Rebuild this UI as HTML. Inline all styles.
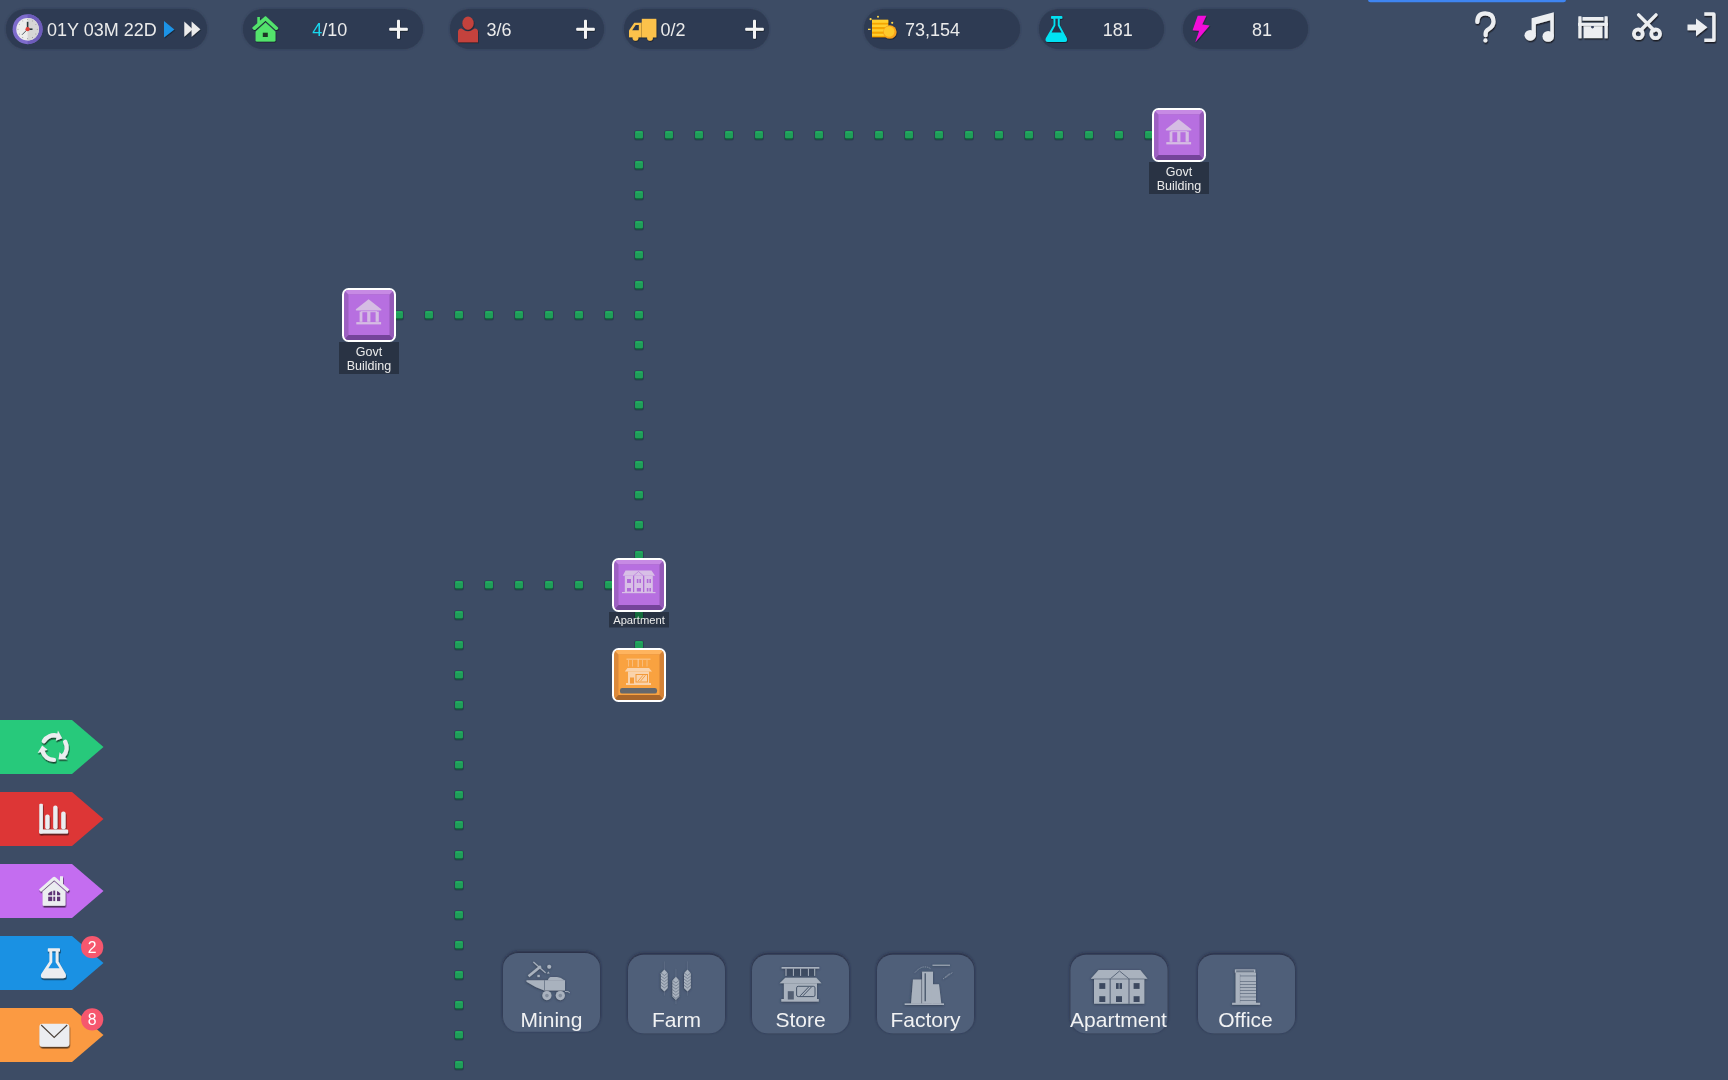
<!DOCTYPE html>
<html><head><meta charset="utf-8"><title>City Builder</title><style>
html,body{margin:0;padding:0;width:1728px;height:1080px;overflow:hidden;background:#3d4c65;}
svg{position:absolute;left:0;top:0;will-change:transform;}
text{font-family:"Liberation Sans",sans-serif;}
</style></head><body>
<svg width="1728" height="1080" viewBox="0 0 1728 1080">
<defs>
<filter id="cs" x="-20%" y="-20%" width="140%" height="140%"><feDropShadow dx="0" dy="-1.2" stdDeviation="1.6" flood-color="#1a2435" flood-opacity="0.85"/></filter>
<filter id="ps" x="-10%" y="-30%" width="120%" height="160%"><feDropShadow dx="0" dy="0" stdDeviation="1" flood-color="#27324a" flood-opacity="0.7"/></filter>
<filter id="ds" x="-30%" y="-30%" width="160%" height="160%"><feDropShadow dx="0.5" dy="1" stdDeviation="0.4" flood-color="#0e1420" flood-opacity="0.8"/></filter>
<filter id="ds2" x="-30%" y="-30%" width="160%" height="160%"><feDropShadow dx="0.6" dy="1.5" stdDeviation="0.5" flood-color="#14181f" flood-opacity="0.9"/></filter>
<filter id="is" x="-30%" y="-30%" width="160%" height="160%"><feDropShadow dx="-0.3" dy="0.6" stdDeviation="0.9" flood-color="#27344a" flood-opacity="0.9"/></filter>
<filter id="ds3" x="-30%" y="-30%" width="160%" height="160%"><feDropShadow dx="0.6" dy="1.6" stdDeviation="0.6" flood-color="#141414" flood-opacity="0.75"/></filter>
</defs>
<rect x="1368" y="-4" width="198" height="6.3" rx="2.5" fill="#3f85f1"/>
<rect x="6" y="9" width="201" height="40" rx="20" ry="20" fill="#2f3b52" filter="url(#ps)"/>
<rect x="243" y="9" width="180" height="40" rx="20" ry="20" fill="#2f3b52" filter="url(#ps)"/>
<rect x="450" y="9" width="154" height="40" rx="20" ry="20" fill="#2f3b52" filter="url(#ps)"/>
<rect x="624" y="9" width="145" height="40" rx="20" ry="20" fill="#2f3b52" filter="url(#ps)"/>
<rect x="864" y="9" width="156" height="40" rx="20" ry="20" fill="#2f3b52" filter="url(#ps)"/>
<rect x="1039" y="9" width="125" height="40" rx="20" ry="20" fill="#2f3b52" filter="url(#ps)"/>
<rect x="1183" y="9" width="125" height="40" rx="20" ry="20" fill="#2f3b52" filter="url(#ps)"/>
<circle cx="27.6" cy="29.2" r="15" fill="#7e6ccc"/>
<path d="M27.6 14.2 A15 15 0 0 1 27.6 44.2 Z" fill="#6d5cba"/>
<circle cx="27.6" cy="29.2" r="11.3" fill="#ececec"/>
<path d="M27.6 17.9 A11.3 11.3 0 0 1 27.6 40.5 Z" fill="#d6d6d6"/>
<circle cx="37.20" cy="29.20" r="0.45" fill="#6a6a6a"/>
<circle cx="35.91" cy="34.00" r="0.45" fill="#6a6a6a"/>
<circle cx="32.40" cy="37.51" r="0.45" fill="#6a6a6a"/>
<circle cx="27.60" cy="38.80" r="0.45" fill="#6a6a6a"/>
<circle cx="22.80" cy="37.51" r="0.45" fill="#6a6a6a"/>
<circle cx="19.29" cy="34.00" r="0.45" fill="#6a6a6a"/>
<circle cx="18.00" cy="29.20" r="0.45" fill="#6a6a6a"/>
<circle cx="19.29" cy="24.40" r="0.45" fill="#6a6a6a"/>
<circle cx="22.80" cy="20.89" r="0.45" fill="#6a6a6a"/>
<circle cx="27.60" cy="19.60" r="0.45" fill="#6a6a6a"/>
<circle cx="32.40" cy="20.89" r="0.45" fill="#6a6a6a"/>
<circle cx="35.91" cy="24.40" r="0.45" fill="#6a6a6a"/>
<g stroke="#29363c" stroke-linecap="butt"><line x1="27.6" y1="29.2" x2="27.6" y2="21.8" stroke-width="1.6"/><line x1="27.6" y1="29.2" x2="32.5" y2="29.2" stroke-width="1.6"/><line x1="27.6" y1="29.2" x2="22" y2="34.8" stroke-width="0.8"/></g>
<circle cx="27.6" cy="29.2" r="2.1" fill="#e2403a"/>
<text x="47" y="36.1" font-size="18" fill="#ebebeb" text-anchor="start" transform="matrix(1 0 0 1.06 0 -2.166)">01Y 03M 22D</text>
<polygon points="164,21 174.3,29.4 164,37.6" fill="#1f93e6" filter="url(#ds)"/>
<g fill="#ececec" filter="url(#ds)"><polygon points="184.3,21.6 192.6,29.2 184.3,36.8"/><polygon points="191.6,21.6 200.3,29.2 191.6,36.8"/></g>
<g filter="url(#ds)"><path d="M257.3 17 h2.6 v3.8 L265.1 16.3 Q265.5 16 265.9 16.3 L278 27.4 Q278.6 28.2 277.8 29 L277 29.8 Q276.2 30.4 275.5 29.8 L265.5 20.7 L255.3 29.8 Q254.6 30.4 253.8 29.8 L252.6 28.8 Q252 28.1 252.6 27.3 L257.3 23.2 Z" fill="#52e36c"/><path d="M255.6 31.4 L265.5 22.5 L275.4 31.4 V40.3 Q275.4 41.6 274 41.6 H257 Q255.6 41.6 255.6 40.3 Z" fill="#52e36c"/></g>
<rect x="262.8" y="32.7" width="5" height="4.3" fill="#1d3626"/>
<text x="312.3" y="36.1" font-size="18" fill="#ebebeb" transform="matrix(1 0 0 1.06 0 -2.166)"><tspan fill="#1ad6ee">4</tspan>/10</text>
<g fill="#f4f4f4" filter="url(#ds)"><rect x="389.2" y="27.7" width="18.6" height="3" rx="1"/><rect x="397.0" y="19.7" width="3" height="19" rx="1"/></g>
<g fill="#c4433c" filter="url(#ds)"><ellipse cx="468" cy="23.2" rx="5.6" ry="6.6"/><path d="M458 31.5 Q458.5 28.2 461.5 28.5 Q468 34 474.5 28.5 Q477.6 28.2 478 31.5 V42.3 H458 Z"/></g>
<text x="486.5" y="36.1" font-size="18" fill="#ebebeb" text-anchor="start" transform="matrix(1 0 0 1.06 0 -2.166)">3/6</text>
<g fill="#f4f4f4" filter="url(#ds)"><rect x="576.2" y="27.7" width="18.6" height="3" rx="1"/><rect x="584.0" y="19.7" width="3" height="19" rx="1"/></g>
<g fill="#fcc24c" filter="url(#ds)"><rect x="641.8" y="18.8" width="14.5" height="18.5"/><path d="M629 37.3 V30.6 L634.3 22.8 H641 V37.3 Z"/><circle cx="635.5" cy="37.8" r="2.9"/><circle cx="650" cy="37.8" r="2.9"/></g><polygon points="632.2,30.2 635.7,25 638.8,25 638.8,30.2" fill="#2a3549"/><rect x="641" y="22.5" width="0.8" height="14.8" fill="#d9a438"/>
<text x="660.5" y="36.1" font-size="18" fill="#ebebeb" text-anchor="start" transform="matrix(1 0 0 1.06 0 -2.166)">0/2</text>
<g fill="#f4f4f4" filter="url(#ds)"><rect x="745.2" y="27.7" width="18.6" height="3" rx="1"/><rect x="753.0" y="19.7" width="3" height="19" rx="1"/></g>
<g filter="url(#ds)"><rect x="872" y="19.8" width="16.2" height="17.4" fill="#f4a600"/><g fill="#ffcf2e"><rect x="872" y="19.8" width="16.2" height="3"/><rect x="872" y="24.6" width="16.2" height="2.4"/><rect x="872" y="29.2" width="16.2" height="2.4"/><rect x="872" y="33.8" width="16.2" height="2"/></g><circle cx="889.8" cy="31.9" r="6.7" fill="#f7a21a"/><circle cx="889.1" cy="31.5" r="5.3" fill="#ffc92c"/></g><g fill="#ffd84a"><circle cx="870.6" cy="19.2" r="1.1"/><circle cx="878" cy="16.8" r="1"/><circle cx="892.2" cy="22.8" r="1.1"/><rect x="868" y="28.7" width="2.6" height="1.3"/></g>
<text x="905" y="36.1" font-size="18" fill="#ebebeb" text-anchor="start" transform="matrix(1 0 0 1.06 0 -2.166)">73,154</text>
<g fill="#06e2f3" filter="url(#ds)"><rect x="1051" y="15.9" width="11.3" height="2.9" rx="0.8"/><path d="M1053.6 18.6 H1059.6 V25 L1066.8 38.3 Q1068 42 1064.2 42 H1048.4 Q1044.6 42 1045.8 38.3 L1053.6 25 Z"/></g><path d="M1055.4 18.8 H1057.8 V25.6 L1061.6 32.6 H1051.6 L1055.4 25.6 Z" fill="#27334a"/>
<text x="1117.7" y="36.1" font-size="18" fill="#ebebeb" text-anchor="middle" transform="matrix(1 0 0 1.06 0 -2.166)">181</text>
<polygon points="1197.7,15.8 1206.3,15.8 1202.2,24.6 1209.6,25.6 1195.3,42.3 1199.2,30.8 1192.6,30.2" fill="#f20cd9" filter="url(#ds)"/>
<text x="1262" y="36.1" font-size="18" fill="#ebebeb" text-anchor="middle" transform="matrix(1 0 0 1.06 0 -2.166)">81</text>
<g fill="#eceef1" stroke="#eceef1" filter="url(#ds2)"><path d="M1477.3 22 Q1477.3 13.3 1485.2 13.3 Q1493.5 13.3 1493.5 21.6 Q1493.5 26.2 1488.7 29 Q1485.6 30.8 1485.6 33.5 V35.2" fill="none" stroke-width="4.2" stroke-linecap="round"/><circle cx="1485.4" cy="40.4" r="2.1" stroke="none"/></g>
<g fill="#eceef1" stroke="#eceef1" filter="url(#ds2)"><path d="M1531.6 18.2 L1553.8 12.2 V36 L1550.3 36 V20.2 L1535.8 24.2 V34.6 L1531.6 34.6 Z" stroke="none"/><ellipse cx="1530.2" cy="35.3" rx="5.7" ry="5.4" stroke="none"/><ellipse cx="1548.2" cy="36.4" rx="5.7" ry="5.4" stroke="none"/></g>
<g fill="#eceef1" stroke="#eceef1" filter="url(#ds2)"><rect x="1578.3" y="16.3" width="3.2" height="22" rx="0.5" stroke="none"/><rect x="1604.5" y="16.3" width="3.2" height="22" rx="0.5" stroke="none"/><rect x="1582.5" y="17" width="21" height="3.6" stroke="none"/><rect x="1578" y="22.8" width="30" height="3.1" stroke="none"/><rect x="1583.6" y="26.3" width="18.8" height="11.8" stroke="none"/></g>
<path d="M1591.2 26.1 V27.2 Q1592.5 29.6 1593.8 27.2 V26.1 Z" fill="#3a4560"/>
<g fill="#eceef1" stroke="#eceef1" filter="url(#ds2)"><line x1="1638.6" y1="14.8" x2="1654.2" y2="30.5" stroke-width="3.3" stroke-linecap="round"/><line x1="1656" y1="14.8" x2="1640.4" y2="30.5" stroke-width="3.3" stroke-linecap="round"/><circle cx="1638.3" cy="33.8" r="4.4" fill="none" stroke-width="3.8"/><circle cx="1655.6" cy="33.8" r="4.4" fill="none" stroke-width="3.8"/></g>
<g fill="#eceef1" stroke="#eceef1" filter="url(#ds2)"><path d="M1704.3 12.3 H1713.6 Q1715.6 12.3 1715.6 14.3 V40 Q1715.6 42 1713.6 42 H1704.3 V38.6 H1712.2 V15.7 H1704.3 Z" stroke="none"/><path d="M1687.5 24.6 H1696 V18.4 L1707.4 27.2 L1696 36.3 V30.2 H1687.5 Z" stroke="none"/></g>
<rect x="634.2" y="130.4" width="9.6" height="10" rx="2" fill="#16283a" opacity="0.45"/><rect x="635" y="131" width="8" height="8.4" rx="1.3" fill="#135f37"/><rect x="635" y="131" width="8" height="7.3" rx="1.3" fill="#1f9e59"/><rect x="635.6" y="131.4" width="6.8" height="1.4" rx="0.6" fill="#27b066" opacity="0.8"/>
<rect x="664.2" y="130.4" width="9.6" height="10" rx="2" fill="#16283a" opacity="0.45"/><rect x="665" y="131" width="8" height="8.4" rx="1.3" fill="#135f37"/><rect x="665" y="131" width="8" height="7.3" rx="1.3" fill="#1f9e59"/><rect x="665.6" y="131.4" width="6.8" height="1.4" rx="0.6" fill="#27b066" opacity="0.8"/>
<rect x="694.2" y="130.4" width="9.6" height="10" rx="2" fill="#16283a" opacity="0.45"/><rect x="695" y="131" width="8" height="8.4" rx="1.3" fill="#135f37"/><rect x="695" y="131" width="8" height="7.3" rx="1.3" fill="#1f9e59"/><rect x="695.6" y="131.4" width="6.8" height="1.4" rx="0.6" fill="#27b066" opacity="0.8"/>
<rect x="724.2" y="130.4" width="9.6" height="10" rx="2" fill="#16283a" opacity="0.45"/><rect x="725" y="131" width="8" height="8.4" rx="1.3" fill="#135f37"/><rect x="725" y="131" width="8" height="7.3" rx="1.3" fill="#1f9e59"/><rect x="725.6" y="131.4" width="6.8" height="1.4" rx="0.6" fill="#27b066" opacity="0.8"/>
<rect x="754.2" y="130.4" width="9.6" height="10" rx="2" fill="#16283a" opacity="0.45"/><rect x="755" y="131" width="8" height="8.4" rx="1.3" fill="#135f37"/><rect x="755" y="131" width="8" height="7.3" rx="1.3" fill="#1f9e59"/><rect x="755.6" y="131.4" width="6.8" height="1.4" rx="0.6" fill="#27b066" opacity="0.8"/>
<rect x="784.2" y="130.4" width="9.6" height="10" rx="2" fill="#16283a" opacity="0.45"/><rect x="785" y="131" width="8" height="8.4" rx="1.3" fill="#135f37"/><rect x="785" y="131" width="8" height="7.3" rx="1.3" fill="#1f9e59"/><rect x="785.6" y="131.4" width="6.8" height="1.4" rx="0.6" fill="#27b066" opacity="0.8"/>
<rect x="814.2" y="130.4" width="9.6" height="10" rx="2" fill="#16283a" opacity="0.45"/><rect x="815" y="131" width="8" height="8.4" rx="1.3" fill="#135f37"/><rect x="815" y="131" width="8" height="7.3" rx="1.3" fill="#1f9e59"/><rect x="815.6" y="131.4" width="6.8" height="1.4" rx="0.6" fill="#27b066" opacity="0.8"/>
<rect x="844.2" y="130.4" width="9.6" height="10" rx="2" fill="#16283a" opacity="0.45"/><rect x="845" y="131" width="8" height="8.4" rx="1.3" fill="#135f37"/><rect x="845" y="131" width="8" height="7.3" rx="1.3" fill="#1f9e59"/><rect x="845.6" y="131.4" width="6.8" height="1.4" rx="0.6" fill="#27b066" opacity="0.8"/>
<rect x="874.2" y="130.4" width="9.6" height="10" rx="2" fill="#16283a" opacity="0.45"/><rect x="875" y="131" width="8" height="8.4" rx="1.3" fill="#135f37"/><rect x="875" y="131" width="8" height="7.3" rx="1.3" fill="#1f9e59"/><rect x="875.6" y="131.4" width="6.8" height="1.4" rx="0.6" fill="#27b066" opacity="0.8"/>
<rect x="904.2" y="130.4" width="9.6" height="10" rx="2" fill="#16283a" opacity="0.45"/><rect x="905" y="131" width="8" height="8.4" rx="1.3" fill="#135f37"/><rect x="905" y="131" width="8" height="7.3" rx="1.3" fill="#1f9e59"/><rect x="905.6" y="131.4" width="6.8" height="1.4" rx="0.6" fill="#27b066" opacity="0.8"/>
<rect x="934.2" y="130.4" width="9.6" height="10" rx="2" fill="#16283a" opacity="0.45"/><rect x="935" y="131" width="8" height="8.4" rx="1.3" fill="#135f37"/><rect x="935" y="131" width="8" height="7.3" rx="1.3" fill="#1f9e59"/><rect x="935.6" y="131.4" width="6.8" height="1.4" rx="0.6" fill="#27b066" opacity="0.8"/>
<rect x="964.2" y="130.4" width="9.6" height="10" rx="2" fill="#16283a" opacity="0.45"/><rect x="965" y="131" width="8" height="8.4" rx="1.3" fill="#135f37"/><rect x="965" y="131" width="8" height="7.3" rx="1.3" fill="#1f9e59"/><rect x="965.6" y="131.4" width="6.8" height="1.4" rx="0.6" fill="#27b066" opacity="0.8"/>
<rect x="994.2" y="130.4" width="9.6" height="10" rx="2" fill="#16283a" opacity="0.45"/><rect x="995" y="131" width="8" height="8.4" rx="1.3" fill="#135f37"/><rect x="995" y="131" width="8" height="7.3" rx="1.3" fill="#1f9e59"/><rect x="995.6" y="131.4" width="6.8" height="1.4" rx="0.6" fill="#27b066" opacity="0.8"/>
<rect x="1024.2" y="130.4" width="9.6" height="10" rx="2" fill="#16283a" opacity="0.45"/><rect x="1025" y="131" width="8" height="8.4" rx="1.3" fill="#135f37"/><rect x="1025" y="131" width="8" height="7.3" rx="1.3" fill="#1f9e59"/><rect x="1025.6" y="131.4" width="6.8" height="1.4" rx="0.6" fill="#27b066" opacity="0.8"/>
<rect x="1054.2" y="130.4" width="9.6" height="10" rx="2" fill="#16283a" opacity="0.45"/><rect x="1055" y="131" width="8" height="8.4" rx="1.3" fill="#135f37"/><rect x="1055" y="131" width="8" height="7.3" rx="1.3" fill="#1f9e59"/><rect x="1055.6" y="131.4" width="6.8" height="1.4" rx="0.6" fill="#27b066" opacity="0.8"/>
<rect x="1084.2" y="130.4" width="9.6" height="10" rx="2" fill="#16283a" opacity="0.45"/><rect x="1085" y="131" width="8" height="8.4" rx="1.3" fill="#135f37"/><rect x="1085" y="131" width="8" height="7.3" rx="1.3" fill="#1f9e59"/><rect x="1085.6" y="131.4" width="6.8" height="1.4" rx="0.6" fill="#27b066" opacity="0.8"/>
<rect x="1114.2" y="130.4" width="9.6" height="10" rx="2" fill="#16283a" opacity="0.45"/><rect x="1115" y="131" width="8" height="8.4" rx="1.3" fill="#135f37"/><rect x="1115" y="131" width="8" height="7.3" rx="1.3" fill="#1f9e59"/><rect x="1115.6" y="131.4" width="6.8" height="1.4" rx="0.6" fill="#27b066" opacity="0.8"/>
<rect x="1144.2" y="130.4" width="9.6" height="10" rx="2" fill="#16283a" opacity="0.45"/><rect x="1145" y="131" width="8" height="8.4" rx="1.3" fill="#135f37"/><rect x="1145" y="131" width="8" height="7.3" rx="1.3" fill="#1f9e59"/><rect x="1145.6" y="131.4" width="6.8" height="1.4" rx="0.6" fill="#27b066" opacity="0.8"/>
<rect x="634.2" y="160.4" width="9.6" height="10" rx="2" fill="#16283a" opacity="0.45"/><rect x="635" y="161" width="8" height="8.4" rx="1.3" fill="#135f37"/><rect x="635" y="161" width="8" height="7.3" rx="1.3" fill="#1f9e59"/><rect x="635.6" y="161.4" width="6.8" height="1.4" rx="0.6" fill="#27b066" opacity="0.8"/>
<rect x="634.2" y="190.4" width="9.6" height="10" rx="2" fill="#16283a" opacity="0.45"/><rect x="635" y="191" width="8" height="8.4" rx="1.3" fill="#135f37"/><rect x="635" y="191" width="8" height="7.3" rx="1.3" fill="#1f9e59"/><rect x="635.6" y="191.4" width="6.8" height="1.4" rx="0.6" fill="#27b066" opacity="0.8"/>
<rect x="634.2" y="220.4" width="9.6" height="10" rx="2" fill="#16283a" opacity="0.45"/><rect x="635" y="221" width="8" height="8.4" rx="1.3" fill="#135f37"/><rect x="635" y="221" width="8" height="7.3" rx="1.3" fill="#1f9e59"/><rect x="635.6" y="221.4" width="6.8" height="1.4" rx="0.6" fill="#27b066" opacity="0.8"/>
<rect x="634.2" y="250.4" width="9.6" height="10" rx="2" fill="#16283a" opacity="0.45"/><rect x="635" y="251" width="8" height="8.4" rx="1.3" fill="#135f37"/><rect x="635" y="251" width="8" height="7.3" rx="1.3" fill="#1f9e59"/><rect x="635.6" y="251.4" width="6.8" height="1.4" rx="0.6" fill="#27b066" opacity="0.8"/>
<rect x="634.2" y="280.4" width="9.6" height="10" rx="2" fill="#16283a" opacity="0.45"/><rect x="635" y="281" width="8" height="8.4" rx="1.3" fill="#135f37"/><rect x="635" y="281" width="8" height="7.3" rx="1.3" fill="#1f9e59"/><rect x="635.6" y="281.4" width="6.8" height="1.4" rx="0.6" fill="#27b066" opacity="0.8"/>
<rect x="634.2" y="310.4" width="9.6" height="10" rx="2" fill="#16283a" opacity="0.45"/><rect x="635" y="311" width="8" height="8.4" rx="1.3" fill="#135f37"/><rect x="635" y="311" width="8" height="7.3" rx="1.3" fill="#1f9e59"/><rect x="635.6" y="311.4" width="6.8" height="1.4" rx="0.6" fill="#27b066" opacity="0.8"/>
<rect x="634.2" y="340.4" width="9.6" height="10" rx="2" fill="#16283a" opacity="0.45"/><rect x="635" y="341" width="8" height="8.4" rx="1.3" fill="#135f37"/><rect x="635" y="341" width="8" height="7.3" rx="1.3" fill="#1f9e59"/><rect x="635.6" y="341.4" width="6.8" height="1.4" rx="0.6" fill="#27b066" opacity="0.8"/>
<rect x="634.2" y="370.4" width="9.6" height="10" rx="2" fill="#16283a" opacity="0.45"/><rect x="635" y="371" width="8" height="8.4" rx="1.3" fill="#135f37"/><rect x="635" y="371" width="8" height="7.3" rx="1.3" fill="#1f9e59"/><rect x="635.6" y="371.4" width="6.8" height="1.4" rx="0.6" fill="#27b066" opacity="0.8"/>
<rect x="634.2" y="400.4" width="9.6" height="10" rx="2" fill="#16283a" opacity="0.45"/><rect x="635" y="401" width="8" height="8.4" rx="1.3" fill="#135f37"/><rect x="635" y="401" width="8" height="7.3" rx="1.3" fill="#1f9e59"/><rect x="635.6" y="401.4" width="6.8" height="1.4" rx="0.6" fill="#27b066" opacity="0.8"/>
<rect x="634.2" y="430.4" width="9.6" height="10" rx="2" fill="#16283a" opacity="0.45"/><rect x="635" y="431" width="8" height="8.4" rx="1.3" fill="#135f37"/><rect x="635" y="431" width="8" height="7.3" rx="1.3" fill="#1f9e59"/><rect x="635.6" y="431.4" width="6.8" height="1.4" rx="0.6" fill="#27b066" opacity="0.8"/>
<rect x="634.2" y="460.4" width="9.6" height="10" rx="2" fill="#16283a" opacity="0.45"/><rect x="635" y="461" width="8" height="8.4" rx="1.3" fill="#135f37"/><rect x="635" y="461" width="8" height="7.3" rx="1.3" fill="#1f9e59"/><rect x="635.6" y="461.4" width="6.8" height="1.4" rx="0.6" fill="#27b066" opacity="0.8"/>
<rect x="634.2" y="490.4" width="9.6" height="10" rx="2" fill="#16283a" opacity="0.45"/><rect x="635" y="491" width="8" height="8.4" rx="1.3" fill="#135f37"/><rect x="635" y="491" width="8" height="7.3" rx="1.3" fill="#1f9e59"/><rect x="635.6" y="491.4" width="6.8" height="1.4" rx="0.6" fill="#27b066" opacity="0.8"/>
<rect x="634.2" y="520.4" width="9.6" height="10" rx="2" fill="#16283a" opacity="0.45"/><rect x="635" y="521" width="8" height="8.4" rx="1.3" fill="#135f37"/><rect x="635" y="521" width="8" height="7.3" rx="1.3" fill="#1f9e59"/><rect x="635.6" y="521.4" width="6.8" height="1.4" rx="0.6" fill="#27b066" opacity="0.8"/>
<rect x="634.2" y="550.4" width="9.6" height="10" rx="2" fill="#16283a" opacity="0.45"/><rect x="635" y="551" width="8" height="8.4" rx="1.3" fill="#135f37"/><rect x="635" y="551" width="8" height="7.3" rx="1.3" fill="#1f9e59"/><rect x="635.6" y="551.4" width="6.8" height="1.4" rx="0.6" fill="#27b066" opacity="0.8"/>
<rect x="634.2" y="610.4" width="9.6" height="10" rx="2" fill="#16283a" opacity="0.45"/><rect x="635" y="611" width="8" height="8.4" rx="1.3" fill="#135f37"/><rect x="635" y="611" width="8" height="7.3" rx="1.3" fill="#1f9e59"/><rect x="635.6" y="611.4" width="6.8" height="1.4" rx="0.6" fill="#27b066" opacity="0.8"/>
<rect x="634.2" y="640.4" width="9.6" height="10" rx="2" fill="#16283a" opacity="0.45"/><rect x="635" y="641" width="8" height="8.4" rx="1.3" fill="#135f37"/><rect x="635" y="641" width="8" height="7.3" rx="1.3" fill="#1f9e59"/><rect x="635.6" y="641.4" width="6.8" height="1.4" rx="0.6" fill="#27b066" opacity="0.8"/>
<rect x="394.2" y="310.4" width="9.6" height="10" rx="2" fill="#16283a" opacity="0.45"/><rect x="395" y="311" width="8" height="8.4" rx="1.3" fill="#135f37"/><rect x="395" y="311" width="8" height="7.3" rx="1.3" fill="#1f9e59"/><rect x="395.6" y="311.4" width="6.8" height="1.4" rx="0.6" fill="#27b066" opacity="0.8"/>
<rect x="424.2" y="310.4" width="9.6" height="10" rx="2" fill="#16283a" opacity="0.45"/><rect x="425" y="311" width="8" height="8.4" rx="1.3" fill="#135f37"/><rect x="425" y="311" width="8" height="7.3" rx="1.3" fill="#1f9e59"/><rect x="425.6" y="311.4" width="6.8" height="1.4" rx="0.6" fill="#27b066" opacity="0.8"/>
<rect x="454.2" y="310.4" width="9.6" height="10" rx="2" fill="#16283a" opacity="0.45"/><rect x="455" y="311" width="8" height="8.4" rx="1.3" fill="#135f37"/><rect x="455" y="311" width="8" height="7.3" rx="1.3" fill="#1f9e59"/><rect x="455.6" y="311.4" width="6.8" height="1.4" rx="0.6" fill="#27b066" opacity="0.8"/>
<rect x="484.2" y="310.4" width="9.6" height="10" rx="2" fill="#16283a" opacity="0.45"/><rect x="485" y="311" width="8" height="8.4" rx="1.3" fill="#135f37"/><rect x="485" y="311" width="8" height="7.3" rx="1.3" fill="#1f9e59"/><rect x="485.6" y="311.4" width="6.8" height="1.4" rx="0.6" fill="#27b066" opacity="0.8"/>
<rect x="514.2" y="310.4" width="9.6" height="10" rx="2" fill="#16283a" opacity="0.45"/><rect x="515" y="311" width="8" height="8.4" rx="1.3" fill="#135f37"/><rect x="515" y="311" width="8" height="7.3" rx="1.3" fill="#1f9e59"/><rect x="515.6" y="311.4" width="6.8" height="1.4" rx="0.6" fill="#27b066" opacity="0.8"/>
<rect x="544.2" y="310.4" width="9.6" height="10" rx="2" fill="#16283a" opacity="0.45"/><rect x="545" y="311" width="8" height="8.4" rx="1.3" fill="#135f37"/><rect x="545" y="311" width="8" height="7.3" rx="1.3" fill="#1f9e59"/><rect x="545.6" y="311.4" width="6.8" height="1.4" rx="0.6" fill="#27b066" opacity="0.8"/>
<rect x="574.2" y="310.4" width="9.6" height="10" rx="2" fill="#16283a" opacity="0.45"/><rect x="575" y="311" width="8" height="8.4" rx="1.3" fill="#135f37"/><rect x="575" y="311" width="8" height="7.3" rx="1.3" fill="#1f9e59"/><rect x="575.6" y="311.4" width="6.8" height="1.4" rx="0.6" fill="#27b066" opacity="0.8"/>
<rect x="604.2" y="310.4" width="9.6" height="10" rx="2" fill="#16283a" opacity="0.45"/><rect x="605" y="311" width="8" height="8.4" rx="1.3" fill="#135f37"/><rect x="605" y="311" width="8" height="7.3" rx="1.3" fill="#1f9e59"/><rect x="605.6" y="311.4" width="6.8" height="1.4" rx="0.6" fill="#27b066" opacity="0.8"/>
<rect x="454.2" y="580.4" width="9.6" height="10" rx="2" fill="#16283a" opacity="0.45"/><rect x="455" y="581" width="8" height="8.4" rx="1.3" fill="#135f37"/><rect x="455" y="581" width="8" height="7.3" rx="1.3" fill="#1f9e59"/><rect x="455.6" y="581.4" width="6.8" height="1.4" rx="0.6" fill="#27b066" opacity="0.8"/>
<rect x="484.2" y="580.4" width="9.6" height="10" rx="2" fill="#16283a" opacity="0.45"/><rect x="485" y="581" width="8" height="8.4" rx="1.3" fill="#135f37"/><rect x="485" y="581" width="8" height="7.3" rx="1.3" fill="#1f9e59"/><rect x="485.6" y="581.4" width="6.8" height="1.4" rx="0.6" fill="#27b066" opacity="0.8"/>
<rect x="514.2" y="580.4" width="9.6" height="10" rx="2" fill="#16283a" opacity="0.45"/><rect x="515" y="581" width="8" height="8.4" rx="1.3" fill="#135f37"/><rect x="515" y="581" width="8" height="7.3" rx="1.3" fill="#1f9e59"/><rect x="515.6" y="581.4" width="6.8" height="1.4" rx="0.6" fill="#27b066" opacity="0.8"/>
<rect x="544.2" y="580.4" width="9.6" height="10" rx="2" fill="#16283a" opacity="0.45"/><rect x="545" y="581" width="8" height="8.4" rx="1.3" fill="#135f37"/><rect x="545" y="581" width="8" height="7.3" rx="1.3" fill="#1f9e59"/><rect x="545.6" y="581.4" width="6.8" height="1.4" rx="0.6" fill="#27b066" opacity="0.8"/>
<rect x="574.2" y="580.4" width="9.6" height="10" rx="2" fill="#16283a" opacity="0.45"/><rect x="575" y="581" width="8" height="8.4" rx="1.3" fill="#135f37"/><rect x="575" y="581" width="8" height="7.3" rx="1.3" fill="#1f9e59"/><rect x="575.6" y="581.4" width="6.8" height="1.4" rx="0.6" fill="#27b066" opacity="0.8"/>
<rect x="604.2" y="580.4" width="9.6" height="10" rx="2" fill="#16283a" opacity="0.45"/><rect x="605" y="581" width="8" height="8.4" rx="1.3" fill="#135f37"/><rect x="605" y="581" width="8" height="7.3" rx="1.3" fill="#1f9e59"/><rect x="605.6" y="581.4" width="6.8" height="1.4" rx="0.6" fill="#27b066" opacity="0.8"/>
<rect x="454.2" y="610.4" width="9.6" height="10" rx="2" fill="#16283a" opacity="0.45"/><rect x="455" y="611" width="8" height="8.4" rx="1.3" fill="#135f37"/><rect x="455" y="611" width="8" height="7.3" rx="1.3" fill="#1f9e59"/><rect x="455.6" y="611.4" width="6.8" height="1.4" rx="0.6" fill="#27b066" opacity="0.8"/>
<rect x="454.2" y="640.4" width="9.6" height="10" rx="2" fill="#16283a" opacity="0.45"/><rect x="455" y="641" width="8" height="8.4" rx="1.3" fill="#135f37"/><rect x="455" y="641" width="8" height="7.3" rx="1.3" fill="#1f9e59"/><rect x="455.6" y="641.4" width="6.8" height="1.4" rx="0.6" fill="#27b066" opacity="0.8"/>
<rect x="454.2" y="670.4" width="9.6" height="10" rx="2" fill="#16283a" opacity="0.45"/><rect x="455" y="671" width="8" height="8.4" rx="1.3" fill="#135f37"/><rect x="455" y="671" width="8" height="7.3" rx="1.3" fill="#1f9e59"/><rect x="455.6" y="671.4" width="6.8" height="1.4" rx="0.6" fill="#27b066" opacity="0.8"/>
<rect x="454.2" y="700.4" width="9.6" height="10" rx="2" fill="#16283a" opacity="0.45"/><rect x="455" y="701" width="8" height="8.4" rx="1.3" fill="#135f37"/><rect x="455" y="701" width="8" height="7.3" rx="1.3" fill="#1f9e59"/><rect x="455.6" y="701.4" width="6.8" height="1.4" rx="0.6" fill="#27b066" opacity="0.8"/>
<rect x="454.2" y="730.4" width="9.6" height="10" rx="2" fill="#16283a" opacity="0.45"/><rect x="455" y="731" width="8" height="8.4" rx="1.3" fill="#135f37"/><rect x="455" y="731" width="8" height="7.3" rx="1.3" fill="#1f9e59"/><rect x="455.6" y="731.4" width="6.8" height="1.4" rx="0.6" fill="#27b066" opacity="0.8"/>
<rect x="454.2" y="760.4" width="9.6" height="10" rx="2" fill="#16283a" opacity="0.45"/><rect x="455" y="761" width="8" height="8.4" rx="1.3" fill="#135f37"/><rect x="455" y="761" width="8" height="7.3" rx="1.3" fill="#1f9e59"/><rect x="455.6" y="761.4" width="6.8" height="1.4" rx="0.6" fill="#27b066" opacity="0.8"/>
<rect x="454.2" y="790.4" width="9.6" height="10" rx="2" fill="#16283a" opacity="0.45"/><rect x="455" y="791" width="8" height="8.4" rx="1.3" fill="#135f37"/><rect x="455" y="791" width="8" height="7.3" rx="1.3" fill="#1f9e59"/><rect x="455.6" y="791.4" width="6.8" height="1.4" rx="0.6" fill="#27b066" opacity="0.8"/>
<rect x="454.2" y="820.4" width="9.6" height="10" rx="2" fill="#16283a" opacity="0.45"/><rect x="455" y="821" width="8" height="8.4" rx="1.3" fill="#135f37"/><rect x="455" y="821" width="8" height="7.3" rx="1.3" fill="#1f9e59"/><rect x="455.6" y="821.4" width="6.8" height="1.4" rx="0.6" fill="#27b066" opacity="0.8"/>
<rect x="454.2" y="850.4" width="9.6" height="10" rx="2" fill="#16283a" opacity="0.45"/><rect x="455" y="851" width="8" height="8.4" rx="1.3" fill="#135f37"/><rect x="455" y="851" width="8" height="7.3" rx="1.3" fill="#1f9e59"/><rect x="455.6" y="851.4" width="6.8" height="1.4" rx="0.6" fill="#27b066" opacity="0.8"/>
<rect x="454.2" y="880.4" width="9.6" height="10" rx="2" fill="#16283a" opacity="0.45"/><rect x="455" y="881" width="8" height="8.4" rx="1.3" fill="#135f37"/><rect x="455" y="881" width="8" height="7.3" rx="1.3" fill="#1f9e59"/><rect x="455.6" y="881.4" width="6.8" height="1.4" rx="0.6" fill="#27b066" opacity="0.8"/>
<rect x="454.2" y="910.4" width="9.6" height="10" rx="2" fill="#16283a" opacity="0.45"/><rect x="455" y="911" width="8" height="8.4" rx="1.3" fill="#135f37"/><rect x="455" y="911" width="8" height="7.3" rx="1.3" fill="#1f9e59"/><rect x="455.6" y="911.4" width="6.8" height="1.4" rx="0.6" fill="#27b066" opacity="0.8"/>
<rect x="454.2" y="940.4" width="9.6" height="10" rx="2" fill="#16283a" opacity="0.45"/><rect x="455" y="941" width="8" height="8.4" rx="1.3" fill="#135f37"/><rect x="455" y="941" width="8" height="7.3" rx="1.3" fill="#1f9e59"/><rect x="455.6" y="941.4" width="6.8" height="1.4" rx="0.6" fill="#27b066" opacity="0.8"/>
<rect x="454.2" y="970.4" width="9.6" height="10" rx="2" fill="#16283a" opacity="0.45"/><rect x="455" y="971" width="8" height="8.4" rx="1.3" fill="#135f37"/><rect x="455" y="971" width="8" height="7.3" rx="1.3" fill="#1f9e59"/><rect x="455.6" y="971.4" width="6.8" height="1.4" rx="0.6" fill="#27b066" opacity="0.8"/>
<rect x="454.2" y="1000.4" width="9.6" height="10" rx="2" fill="#16283a" opacity="0.45"/><rect x="455" y="1001" width="8" height="8.4" rx="1.3" fill="#135f37"/><rect x="455" y="1001" width="8" height="7.3" rx="1.3" fill="#1f9e59"/><rect x="455.6" y="1001.4" width="6.8" height="1.4" rx="0.6" fill="#27b066" opacity="0.8"/>
<rect x="454.2" y="1030.4" width="9.6" height="10" rx="2" fill="#16283a" opacity="0.45"/><rect x="455" y="1031" width="8" height="8.4" rx="1.3" fill="#135f37"/><rect x="455" y="1031" width="8" height="7.3" rx="1.3" fill="#1f9e59"/><rect x="455.6" y="1031.4" width="6.8" height="1.4" rx="0.6" fill="#27b066" opacity="0.8"/>
<rect x="454.2" y="1060.4" width="9.6" height="10" rx="2" fill="#16283a" opacity="0.45"/><rect x="455" y="1061" width="8" height="8.4" rx="1.3" fill="#135f37"/><rect x="455" y="1061" width="8" height="7.3" rx="1.3" fill="#1f9e59"/><rect x="455.6" y="1061.4" width="6.8" height="1.4" rx="0.6" fill="#27b066" opacity="0.8"/>
<rect x="1152" y="108" width="54" height="54" rx="6.5" fill="#ffffff"/><clipPath id="tc1"><rect x="1154" y="110" width="50" height="50" rx="4.5"/></clipPath><g clip-path="url(#tc1)"><rect x="1154" y="110" width="25" height="50" fill="#9d60c2"/><rect x="1179" y="110" width="25" height="50" fill="#955ab8"/><polygon points="1154,110 1204,110 1199.5,114.5 1158.5,114.5" fill="#c78ae4"/><polygon points="1154,160 1158.5,155 1199.5,155 1204,160" fill="#74449a"/><rect x="1158.5" y="114.5" width="41" height="40.5" fill="#b76fe0"/></g>
<g fill="#d5bce3" transform="translate(1152,108)"><path d="M26.6 11.3 L39.3 21.3 Q39.8 22.6 38.6 22.6 H14.6 Q13.4 22.6 13.9 21.3 Z"/><rect x="17.6" y="23.6" width="2.8" height="10.2"/><rect x="25.2" y="23.6" width="3.2" height="10.2"/><rect x="33.6" y="23.6" width="3.2" height="10.2"/><rect x="19" y="23.2" width="16" height="1"/><rect x="14.3" y="34.1" width="24.8" height="2.3"/></g>
<rect x="342" y="288" width="54" height="54" rx="6.5" fill="#ffffff"/><clipPath id="tc2"><rect x="344" y="290" width="50" height="50" rx="4.5"/></clipPath><g clip-path="url(#tc2)"><rect x="344" y="290" width="25" height="50" fill="#9d60c2"/><rect x="369" y="290" width="25" height="50" fill="#955ab8"/><polygon points="344,290 394,290 389.5,294.5 348.5,294.5" fill="#c78ae4"/><polygon points="344,340 348.5,335 389.5,335 394,340" fill="#74449a"/><rect x="348.5" y="294.5" width="41" height="40.5" fill="#b76fe0"/></g>
<g fill="#d5bce3" transform="translate(342,288)"><path d="M26.6 11.3 L39.3 21.3 Q39.8 22.6 38.6 22.6 H14.6 Q13.4 22.6 13.9 21.3 Z"/><rect x="17.6" y="23.6" width="2.8" height="10.2"/><rect x="25.2" y="23.6" width="3.2" height="10.2"/><rect x="33.6" y="23.6" width="3.2" height="10.2"/><rect x="19" y="23.2" width="16" height="1"/><rect x="14.3" y="34.1" width="24.8" height="2.3"/></g>
<rect x="612" y="558" width="54" height="54" rx="6.5" fill="#ffffff"/><clipPath id="tc3"><rect x="614" y="560" width="50" height="50" rx="4.5"/></clipPath><g clip-path="url(#tc3)"><rect x="614" y="560" width="25" height="50" fill="#9d60c2"/><rect x="639" y="560" width="25" height="50" fill="#955ab8"/><polygon points="614,560 664,560 659.5,564.5 618.5,564.5" fill="#c78ae4"/><polygon points="614,610 618.5,605 659.5,605 664,610" fill="#74449a"/><rect x="618.5" y="564.5" width="41" height="40.5" fill="#b76fe0"/></g>
<g transform="translate(612,558)"><path d="M13.5 12.5 H39.5 L43 17.8 H10.8 Z" fill="#d8bfe6"/><rect x="12.8" y="17.8" width="28" height="16.5" fill="#d8bfe6"/><rect x="10" y="34" width="33.5" height="1.2" fill="#d8bfe6"/><g fill="#b06ad8"><rect x="21" y="17.8" width="1.2" height="16.2"/><rect x="31" y="17.8" width="1.3" height="16.2"/><rect x="15" y="21" width="4" height="4"/><rect x="15" y="30" width="4" height="3.5"/><rect x="24.8" y="21" width="1.6" height="4"/><rect x="27.4" y="21" width="1.6" height="4"/><rect x="24.8" y="30" width="4.2" height="3.5"/><rect x="34.8" y="21" width="1.6" height="4"/><rect x="37.4" y="21" width="1.6" height="4"/><rect x="34.8" y="30" width="1.6" height="3.5"/><rect x="37.4" y="30" width="1.6" height="3.5"/></g><path d="M21.5 17.8 L26.5 13.5 L31.5 17.8" fill="none" stroke="#b06ad8" stroke-width="0.6"/></g>
<rect x="612" y="648" width="54" height="54" rx="6.5" fill="#ffffff"/><clipPath id="tc4"><rect x="614" y="650" width="50" height="50" rx="4.5"/></clipPath><g clip-path="url(#tc4)"><rect x="614" y="650" width="25" height="50" fill="#dc893a"/><rect x="639" y="650" width="25" height="50" fill="#d48236"/><polygon points="614,650 664,650 659.5,654.5 618.5,654.5" fill="#ffb45e"/><polygon points="614,700 618.5,695 659.5,695 664,700" fill="#a9662a"/><rect x="618.5" y="654.5" width="41" height="40.5" fill="#f9a240"/></g>
<g transform="translate(612,648)"><g fill="#fad3ab" opacity="0.55"><rect x="14.5" y="10.5" width="24" height="1.5"/><rect x="16" y="12" width="1" height="6.5"/><rect x="20" y="12" width="1" height="6.5"/><rect x="30" y="12" width="1" height="6.5"/><rect x="34.5" y="12" width="1" height="6.5"/></g><rect x="25.7" y="11" width="0.9" height="8" fill="#fad3ab"/><path d="M15.5 20 H37 L40 23.5 H12.8 Z" fill="#fad3ab"/><rect x="16" y="23.5" width="21" height="12" fill="#fad3ab"/><rect x="14" y="35" width="25" height="2" fill="#fad3ab"/><rect x="18" y="29.5" width="4" height="6" fill="#f39a3a"/><rect x="23.5" y="26" width="12.5" height="8.5" fill="#f39a3a"/><rect x="24.5" y="27" width="10.5" height="6.5" fill="#fad3ab"/><path d="M26 33.2 L31 27.2 M28.5 33.2 L33.5 27.2" stroke="#f39a3a" stroke-width="0.9"/></g>
<rect x="620" y="688" width="37" height="5.6" rx="2.2" fill="#65686d"/>
<rect x="1149" y="162" width="60" height="32" fill="rgba(0,0,0,0.32)"/>
<text x="1179" y="175.6" font-size="12.5" fill="#ebebeb" text-anchor="middle">Govt</text>
<text x="1179" y="190" font-size="12.5" fill="#ebebeb" text-anchor="middle">Building</text>
<rect x="339" y="342" width="60" height="32" fill="rgba(0,0,0,0.32)"/>
<text x="369" y="355.6" font-size="12.5" fill="#ebebeb" text-anchor="middle">Govt</text>
<text x="369" y="370" font-size="12.5" fill="#ebebeb" text-anchor="middle">Building</text>
<rect x="609" y="612" width="60" height="15.5" fill="rgba(0,0,0,0.32)"/>
<text x="639" y="623.6" font-size="11.2" fill="#ebebeb" text-anchor="middle">Apartment</text>
<polygon points="0,720 72,720 103.5,747 72,774 0,774" fill="#27c97b"/>
<polygon points="0,792 72,792 103.5,819 72,846 0,846" fill="#dd3636"/>
<polygon points="0,864 72,864 103.5,891 72,918 0,918" fill="#c46df0"/>
<polygon points="0,936 72,936 103.5,963 72,990 0,990" fill="#1a91e3"/>
<polygon points="0,1008 72,1008 103.5,1035 72,1062 0,1062" fill="#fb9a42"/>
<g filter="url(#ds3)"><path d="M43.87 741.08 A12.3 12.3 0 0 1 56.86 735.57" fill="none" stroke="#ebedf0" stroke-width="4.4" stroke-linecap="round"/><polygon points="57.94,730.48 55.78,740.66 62.21,738.18" fill="#ebedf0"/><path d="M65.16 741.83 A12.3 12.3 0 0 1 63.44 755.83" fill="none" stroke="#ebedf0" stroke-width="4.4" stroke-linecap="round"/><polygon points="67.31,759.31 59.58,752.35 58.51,759.16" fill="#ebedf0"/><path d="M53.87 759.89 A12.3 12.3 0 0 1 42.60 751.40" fill="none" stroke="#ebedf0" stroke-width="4.4" stroke-linecap="round"/><polygon points="37.66,753.01 47.55,749.79 42.19,745.46" fill="#ebedf0"/></g>
<g fill="#ebedf0" filter="url(#ds3)"><rect x="39.3" y="803.8" width="3.6" height="29.6" rx="1"/><rect x="39.3" y="829.6" width="28.8" height="3.8" rx="1"/><rect x="45.2" y="814.4" width="4.4" height="14.8" rx="2"/><rect x="53.2" y="805.6" width="4.3" height="23.6" rx="2"/><rect x="61.2" y="811.5" width="4.4" height="17.7" rx="2"/></g>
<g filter="url(#ds3)"><path d="M39 889.6 L52.6 877.4 Q54.2 876 55.8 877.4 L60 881.2 V876.3 H63 V884 L69.3 889.6 L67.4 891.8 L54.2 880.2 L41 891.8 Z" fill="#ebedf0"/><path d="M42.6 891.5 L54.2 881.5 L65.4 891.5 V904.8 Q65.4 905.8 64.4 905.8 H43.6 Q42.6 905.8 42.6 904.8 Z" fill="#ebedf0"/></g>
<g fill="#5e3476"><path d="M48.2 895.2 V893.6 Q49.8 891.6 52.2 891 V895.2 Z"/><rect x="53.3" y="890.6" width="1.9" height="4.6"/><path d="M57 891 Q59 891.6 60.2 893.6 V895.2 H57 Z"/><rect x="48.2" y="896.7" width="4" height="4.4"/><rect x="53.3" y="896.7" width="1.9" height="4.4"/><rect x="57" y="896.7" width="3.2" height="4.4"/></g>
<g fill="#ebedf0" filter="url(#ds3)"><rect x="47.8" y="948.3" width="12.2" height="3.2" rx="0.6"/><path d="M49.4 951 H58.5 V961.5 L65.7 974 Q67 978.2 62.8 978.2 H44 Q39.8 978.2 41.2 974 L49.4 961.5 Z"/></g><path d="M52.3 951.4 H55.6 V962.3 L59.6 968.2 H48.3 L52.3 962.3 Z" fill="#1a91e3"/><path d="M52.3 951.4 H55.6 V952.6 H52.3 Z" fill="#0d3a5c" opacity="0.6"/>
<g filter="url(#ds3)"><rect x="39.4" y="1023.8" width="29.9" height="22.9" rx="3" fill="#ebedf0"/></g><path d="M41.2 1025 L54.2 1037.4 L67.2 1025" fill="none" stroke="#4a4038" stroke-width="1.1"/>
<circle cx="92.2" cy="947.2" r="11.1" fill="#f6576e"/>
<text x="92.2" y="952.8000000000001" font-size="15.8" fill="#ffffff" text-anchor="middle">2</text>
<circle cx="92.2" cy="1019.3" r="11.1" fill="#f6576e"/>
<text x="92.2" y="1024.8999999999999" font-size="15.8" fill="#ffffff" text-anchor="middle">8</text>
<rect x="503" y="953" width="97" height="78.79999999999995" rx="15.5" fill="#4f5f79" filter="url(#cs)"/>
<rect x="628" y="954.8" width="97" height="78.5" rx="15.5" fill="#4f5f79" filter="url(#cs)"/>
<rect x="752" y="954.8" width="97" height="78.5" rx="15.5" fill="#4f5f79" filter="url(#cs)"/>
<rect x="877" y="954.8" width="97" height="78.5" rx="15.5" fill="#4f5f79" filter="url(#cs)"/>
<rect x="1070.5" y="954.8" width="97" height="78.5" rx="15.5" fill="#4f5f79" filter="url(#cs)"/>
<rect x="1198" y="954.8" width="97" height="78.5" rx="15.5" fill="#4f5f79" filter="url(#cs)"/>
<g transform="translate(520,956)" filter="url(#is)" fill="#a9b2be"><path d="M6.5 24.3 H45 V34.4 H24.2 Q14 31 6.5 25.8 Z"/><path d="M27.6 24.4 Q29 21.5 30.5 21 H37 Q41 21.5 44.6 24.4 Z"/><rect x="24" y="24.3" width="1" height="10" fill="#3c4a60" opacity="0.5"/><circle cx="26.9" cy="39.6" r="4.6"/><circle cx="40.3" cy="39.6" r="4.6"/><circle cx="26.9" cy="39.6" r="1.8" fill="#3c4a60" opacity="0.35"/><circle cx="40.3" cy="39.6" r="1.8" fill="#3c4a60" opacity="0.35"/><path d="M8.6 20.3 L20.8 10.3" stroke="#a9b2be" stroke-width="2.4"/><path d="M13.4 6 L25.6 16.8" stroke="#a9b2be" stroke-width="1.1"/><circle cx="29.2" cy="10.7" r="2"/><path d="M27 17.6 L28.3 15.5 L29.6 17.6 Z"/><rect x="17.4" y="18.9" width="2.4" height="2.2"/><path d="M45 35.5 Q48.5 35 49.8 36.8" stroke="#a9b2be" stroke-width="0.9" fill="none"/></g>
<g transform="translate(645,956)" filter="url(#is)"><path d="M19.4 13.4 L22.7 17.2 V32.0 L19.4 35.6 L15.899999999999999 32.0 V17.2 Z" fill="#a9b2be"/><path d="M15.899999999999999 16.9 L19.4 19.5 L22.7 16.9" fill="none" stroke="#3c4a60" stroke-width="0.55" opacity="0.8"/><path d="M15.899999999999999 20.0 L19.4 22.6 L22.7 20.0" fill="none" stroke="#3c4a60" stroke-width="0.55" opacity="0.8"/><path d="M15.899999999999999 23.1 L19.4 25.700000000000003 L22.7 23.1" fill="none" stroke="#3c4a60" stroke-width="0.55" opacity="0.8"/><path d="M15.899999999999999 26.200000000000003 L19.4 28.800000000000004 L22.7 26.200000000000003" fill="none" stroke="#3c4a60" stroke-width="0.55" opacity="0.8"/><path d="M15.899999999999999 29.300000000000004 L19.4 31.900000000000006 L22.7 29.300000000000004" fill="none" stroke="#3c4a60" stroke-width="0.55" opacity="0.8"/><line x1="19.4" y1="5.4" x2="19.4" y2="13.4" stroke="#a9b2be" stroke-width="0.5" opacity="0.25"/><line x1="19.4" y1="35.6" x2="19.4" y2="39.6" stroke="#a9b2be" stroke-width="0.5" opacity="0.25"/><path d="M30.9 20.8 L34.199999999999996 24.6 V40.4 L30.9 44 L27.4 40.4 V24.6 Z" fill="#a9b2be"/><path d="M27.4 24.3 L30.9 26.900000000000002 L34.199999999999996 24.3" fill="none" stroke="#3c4a60" stroke-width="0.55" opacity="0.8"/><path d="M27.4 27.400000000000002 L30.9 30.000000000000004 L34.199999999999996 27.400000000000002" fill="none" stroke="#3c4a60" stroke-width="0.55" opacity="0.8"/><path d="M27.4 30.5 L30.9 33.1 L34.199999999999996 30.5" fill="none" stroke="#3c4a60" stroke-width="0.55" opacity="0.8"/><path d="M27.4 33.6 L30.9 36.2 L34.199999999999996 33.6" fill="none" stroke="#3c4a60" stroke-width="0.55" opacity="0.8"/><path d="M27.4 36.7 L30.9 39.300000000000004 L34.199999999999996 36.7" fill="none" stroke="#3c4a60" stroke-width="0.55" opacity="0.8"/><path d="M27.4 39.800000000000004 L30.9 42.400000000000006 L34.199999999999996 39.800000000000004" fill="none" stroke="#3c4a60" stroke-width="0.55" opacity="0.8"/><line x1="30.9" y1="12.8" x2="30.9" y2="20.8" stroke="#a9b2be" stroke-width="0.5" opacity="0.25"/><line x1="30.9" y1="44" x2="30.9" y2="48" stroke="#a9b2be" stroke-width="0.5" opacity="0.25"/><path d="M42.5 13.4 L45.8 17.2 V32.0 L42.5 35.6 L39.0 32.0 V17.2 Z" fill="#a9b2be"/><path d="M39.0 16.9 L42.5 19.5 L45.8 16.9" fill="none" stroke="#3c4a60" stroke-width="0.55" opacity="0.8"/><path d="M39.0 20.0 L42.5 22.6 L45.8 20.0" fill="none" stroke="#3c4a60" stroke-width="0.55" opacity="0.8"/><path d="M39.0 23.1 L42.5 25.700000000000003 L45.8 23.1" fill="none" stroke="#3c4a60" stroke-width="0.55" opacity="0.8"/><path d="M39.0 26.200000000000003 L42.5 28.800000000000004 L45.8 26.200000000000003" fill="none" stroke="#3c4a60" stroke-width="0.55" opacity="0.8"/><path d="M39.0 29.300000000000004 L42.5 31.900000000000006 L45.8 29.300000000000004" fill="none" stroke="#3c4a60" stroke-width="0.55" opacity="0.8"/><line x1="42.5" y1="5.4" x2="42.5" y2="13.4" stroke="#a9b2be" stroke-width="0.5" opacity="0.25"/><line x1="42.5" y1="35.6" x2="42.5" y2="39.6" stroke="#a9b2be" stroke-width="0.5" opacity="0.25"/></g>
<g transform="translate(770,956)" filter="url(#is)"><rect x="15.5" y="12.5" width="30" height="7.3" fill="#3c4a60" opacity="0.55"/><rect x="11.6" y="11" width="37.7" height="1.6" fill="#a9b2be"/><rect x="15.5" y="12.5" width="1" height="7.4" fill="#a9b2be"/><rect x="22.9" y="12.5" width="1" height="7.4" fill="#a9b2be"/><rect x="30.1" y="12.5" width="1" height="7.4" fill="#a9b2be"/><rect x="37.9" y="12.5" width="1" height="7.4" fill="#a9b2be"/><rect x="44.2" y="12.5" width="1" height="7.4" fill="#a9b2be"/><path d="M15.3 21.8 H46.3 L51.4 27.3 H9.7 Z" fill="#a9b2be"/><rect x="13.9" y="27.3" width="33.1" height="16.5" fill="#a9b2be"/><rect x="11.3" y="43" width="37.5" height="2.6" fill="#a9b2be"/><rect x="17.8" y="35.2" width="6" height="8.3" fill="#3c4a60" opacity="0.8"/><rect x="26.6" y="30.3" width="18.4" height="10.3" rx="1.6" fill="none" stroke="#3c4a60" stroke-width="1" opacity="0.9"/><path d="M30.2 39.8 L38.6 31 M33 39.8 L41.4 31" stroke="#3c4a60" stroke-width="0.9"/></g>
<g transform="translate(895,956)" filter="url(#is)" fill="#a9b2be"><rect x="27.1" y="15.7" width="10.9" height="32" /><rect x="29.6" y="17.3" width="1.2" height="28" fill="#3c4a60"/><path d="M18 23.6 H26.4 V47.7 H16 Z"/><path d="M36.6 28.2 H44 L46.3 47.7 H36.6 Z"/><rect x="9.7" y="47.4" width="39.3" height="1.6"/><rect x="37.5" y="8.7" width="17.5" height="1.1" opacity="0.9"/><path d="M20 16.5 Q24 12 28 11 Q33 10.5 36 13" fill="none" stroke="#a9b2be" stroke-width="0.8" stroke-dasharray="1.3 1" opacity="0.7"/><path d="M48 23 L54.5 17.5 M50.5 21.5 L57.5 16.5" fill="none" stroke="#a9b2be" stroke-width="0.8" stroke-dasharray="1.5 0.8" opacity="0.7"/></g>
<g transform="translate(1088,956)" filter="url(#is)"><path d="M10.6 13.9 H52.3 L59.5 22.7 H2.8 Z" fill="#a9b2be"/><path d="M22.5 22.7 L31.5 15 L40.8 22.7" fill="none" stroke="#3c4a60" stroke-width="0.9" opacity="0.8"/><rect x="6" y="22.7" width="50.3" height="25" fill="#a9b2be"/><rect x="6" y="22.7" width="50.3" height="0.8" fill="#3c4a60" opacity="0.5"/><rect x="21.5" y="22.7" width="1.4" height="25" fill="#3c4a60" opacity="0.6"/><rect x="40.3" y="22.7" width="1.4" height="25" fill="#3c4a60" opacity="0.6"/><rect x="11.3" y="27.1" width="6" height="5.8" fill="#3c4a60"/><rect x="11.3" y="40.2" width="6" height="5.8" fill="#3c4a60"/><rect x="28" y="27.1" width="6" height="5.8" fill="#3c4a60"/><rect x="28" y="40.2" width="6" height="5.8" fill="#3c4a60"/><rect x="45.6" y="27.1" width="6" height="5.8" fill="#3c4a60"/><rect x="45.6" y="40.2" width="6" height="5.8" fill="#3c4a60"/><rect x="30.7" y="27.1" width="0.8" height="5.8" fill="#a9b2be"/></g>
<g transform="translate(1215,956)" filter="url(#is)"><rect x="19.9" y="13.4" width="20.4" height="3.3" fill="#a9b2be"/><rect x="21.2" y="14.6" width="17.8" height="1" fill="#3c4a60" opacity="0.9"/><rect x="20.6" y="16.7" width="20.4" height="31" fill="#a9b2be"/><rect x="25" y="19.5" width="16" height="0.9" fill="#3c4a60" opacity="0.55"/><rect x="25" y="25" width="16" height="0.9" fill="#3c4a60" opacity="0.55"/><rect x="25" y="28" width="16" height="0.9" fill="#3c4a60" opacity="0.55"/><rect x="25" y="31" width="16" height="0.9" fill="#3c4a60" opacity="0.55"/><rect x="25" y="34" width="16" height="0.9" fill="#3c4a60" opacity="0.55"/><rect x="25" y="37" width="16" height="0.9" fill="#3c4a60" opacity="0.55"/><rect x="25" y="40.5" width="16" height="0.9" fill="#3c4a60" opacity="0.55"/><rect x="25" y="44" width="16" height="0.9" fill="#3c4a60" opacity="0.55"/><rect x="24.8" y="18" width="0.6" height="29" fill="#3c4a60" opacity="0.3"/><rect x="17.1" y="46.8" width="28" height="2" fill="#a9b2be"/></g>
<text x="551.5" y="1027" font-size="21" fill="#f1f2f3" text-anchor="middle">Mining</text>
<text x="676.5" y="1027" font-size="21" fill="#f1f2f3" text-anchor="middle">Farm</text>
<text x="800.5" y="1027" font-size="21" fill="#f1f2f3" text-anchor="middle">Store</text>
<text x="925.5" y="1027" font-size="21" fill="#f1f2f3" text-anchor="middle">Factory</text>
<text x="1118.5" y="1027" font-size="21" fill="#f1f2f3" text-anchor="middle">Apartment</text>
<text x="1245.5" y="1027" font-size="21" fill="#f1f2f3" text-anchor="middle">Office</text>
</svg>
</body></html>
